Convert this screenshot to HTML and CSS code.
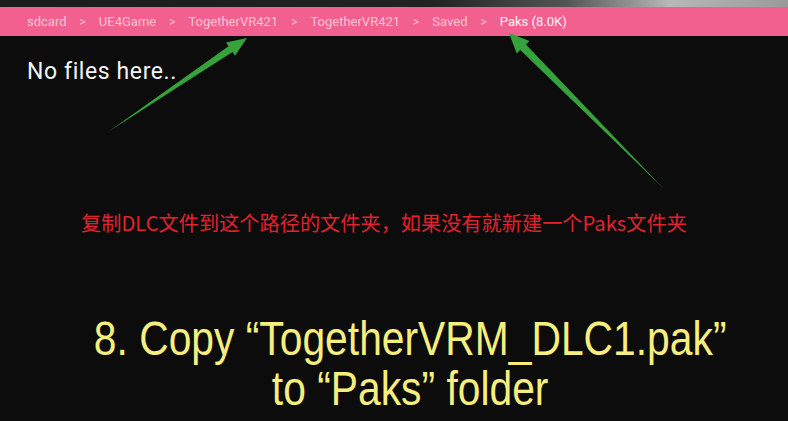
FILE: index.html
```html
<!DOCTYPE html>
<html lang="zh">
<head>
<meta charset="utf-8">
<title>Paks</title>
<link rel="stylesheet" href="styles.css">
</head>
<body>
<div class="screen">
  <div class="status-strip"></div>
  <nav class="crumbs">
    <span class="crumb">sdcard</span><span class="sep">&gt;</span>
    <span class="crumb">UE4Game</span><span class="sep">&gt;</span>
    <span class="crumb">TogetherVR421</span><span class="sep">&gt;</span>
    <span class="crumb">TogetherVR421</span><span class="sep">&gt;</span>
    <span class="crumb">Saved</span><span class="sep">&gt;</span>
    <span class="crumb current">Paks (8.0K)</span>
  </nav>
  <main class="content">
    <p class="empty">No files here..</p>
    <p class="note">复制DLC文件到这个路径的文件夹，如果没有就新建一个Paks文件夹</p>
    <p class="caption">8. Copy “TogetherVRM_DLC1.pak”<br>to “Paks” folder</p>
  </main>
  <svg class="arrows" width="788" height="421" viewBox="0 0 788 421" aria-hidden="true">
    <polygon class="arrow" points="108,132 228.5,46.3 226,42.6 247,38 235,55.8 232.5,52.1"/>
    <polygon class="arrow" points="663,188 520.3,50 516.7,53.5 509,33 529.5,40.9 525.9,44.4"/>
  </svg>
</div>
</body>
</html>
```
FILE: styles.css
```css
html, body {
  margin: 0;
  padding: 0;
  background: #0c0c0c;
}
.screen {
  position: relative;
  width: 788px;
  height: 421px;
  overflow: hidden;
  background: #0c0c0c;
  font-family: Roboto, "Liberation Sans", sans-serif;
}
.status-strip {
  height: 7px;
  background: linear-gradient(90deg, #1c1c1c 0%, #222 55%, #555 72%, #b8b8b8 85%, #9a9a9a 100%);
}
.crumbs {
  height: 29px;
  background: #f2608f;
  display: flex;
  align-items: center;
  padding-left: 27px;
  font-size: 13px;
  color: #fbc2d5;
  white-space: nowrap;
}
.sep {
  margin: 0 13px;
  font-size: 12px;
}
.current {
  color: #fff4f8;
}
.content {
  display: flex;
  flex-direction: column;
}
.empty {
  margin: 23px 0 0 27px;
  font-size: 23px;
  letter-spacing: 0.6px;
  line-height: 26px;
  color: #f4f4f4;
}
.note {
  margin: 125px 0 0 0;
  padding-right: 20px;
  text-align: center;
  font-family: "Noto Sans CJK SC", "Liberation Sans", sans-serif;
  font-size: 20.2px;
  line-height: 26px;
  color: #e3222f;
}
.caption {
  margin: 78px 0 0 0;
  padding-left: 38px;
  text-align: center;
  font-family: "Liberation Sans", Arial, sans-serif;
  font-size: 48px;
  line-height: 50px;
  color: #f6ef7e;
  transform: scaleX(0.85);
}
.arrows {
  position: absolute;
  left: 0;
  top: 0;
}
.arrow {
  fill: #35a23c;
}
```
